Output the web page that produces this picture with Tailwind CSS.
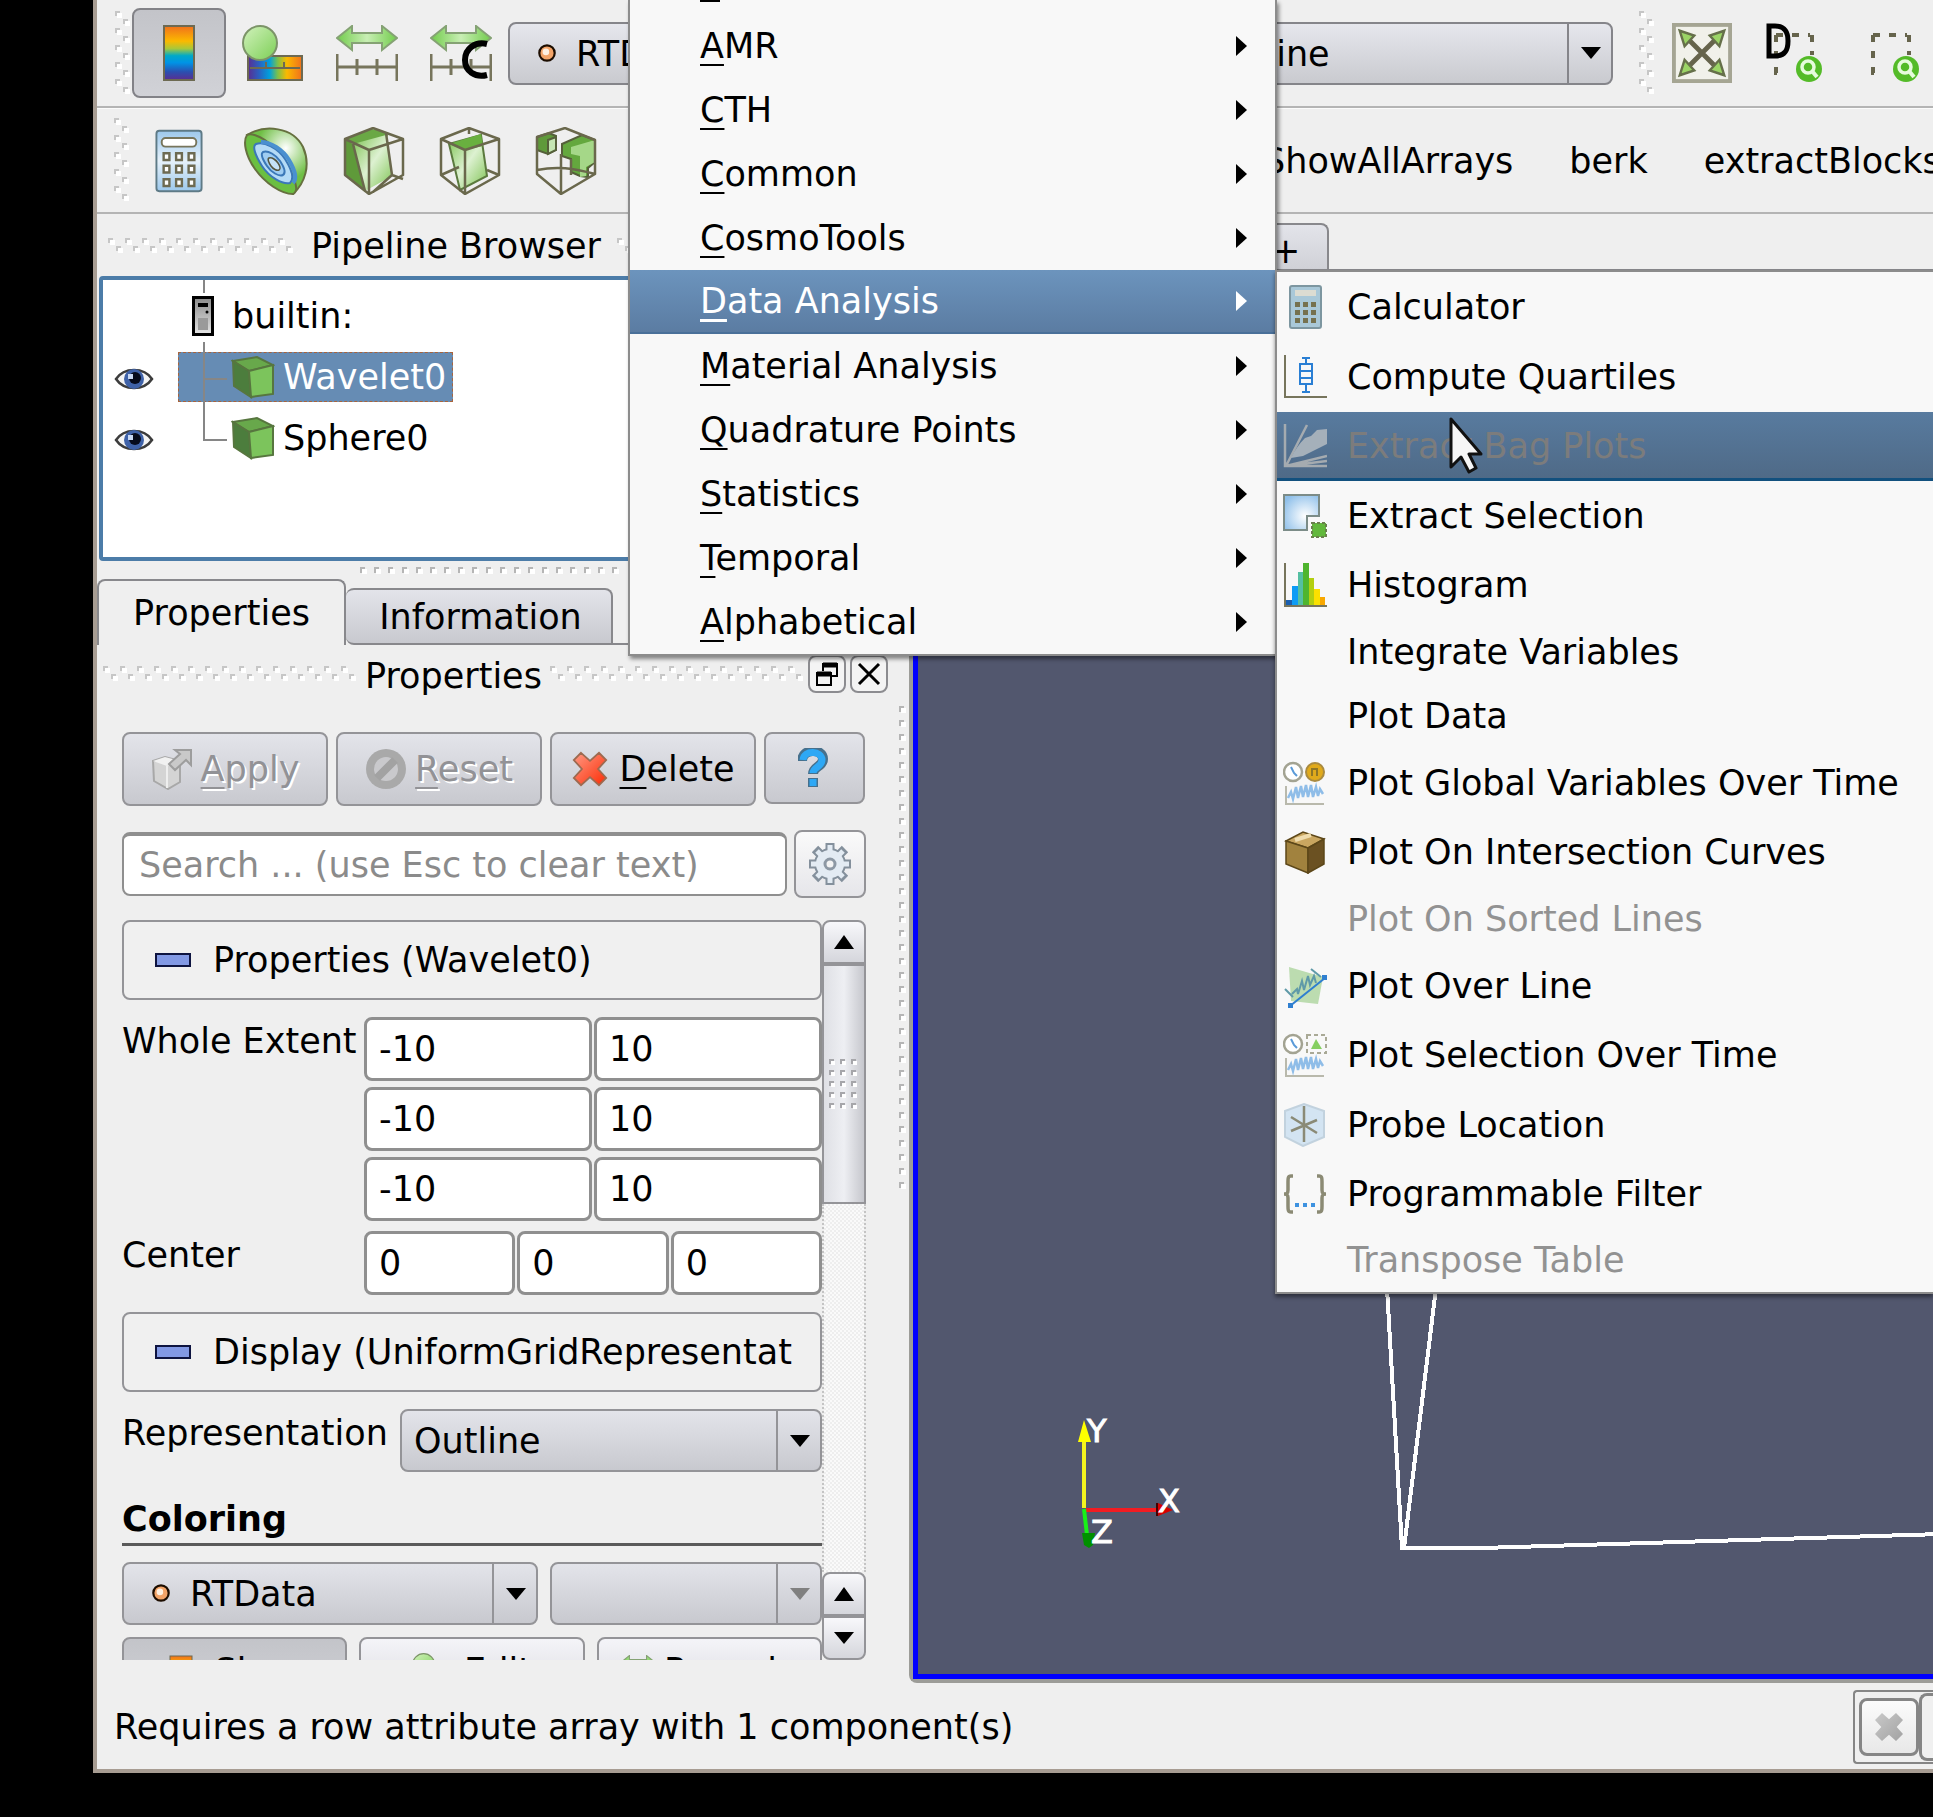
<!DOCTYPE html>
<html lang="en">
<head>
<meta charset="utf-8">
<meta name="viewport" content="width=device-width, initial-scale=1">
<title>ParaView</title>
<script src="https://cdn.jsdelivr.net/npm/@tailwindcss/browser@4"></script>
</head>
<body class="bg-black">

<!-- Shared patterns, gradients and icons -->
<svg class="absolute size-0" aria-hidden="true">
  <defs>
    <pattern id="zigzag" width="17" height="17" patternUnits="userSpaceOnUse">
      <path d="M2 2h5v5h-5zM10 10h5v5h-5z" fill="#fff"/>
      <path d="M0 0h5v2h-3v3h-2zM8 8h5v2h-3v3h-2z" fill="#c6c6c6"/>
    </pattern>
    <pattern id="dots" width="14" height="14" patternUnits="userSpaceOnUse">
      <path d="M2 2h5v5h-5z" fill="#fff"/><path d="M0 0h5v2h-3v4h-2z" fill="#b5b5b5"/>
    </pattern>
    <pattern id="thumbdots" width="11" height="11" patternUnits="userSpaceOnUse">
      <path d="M2 2h4v4h-4z" fill="#fff"/><path d="M0 0h5v2h-3v3h-2z" fill="#a6a6aa"/>
    </pattern>
    <pattern id="mesh" width="4" height="4" patternUnits="userSpaceOnUse">
      <rect width="4" height="4" fill="#fafafa"/><path d="M0 0h2v2h-2zM2 2h2v2h-2z" fill="#eeeeee"/>
    </pattern>
    <linearGradient id="rainbowV" x1="0" y1="0" x2="0" y2="1">
      <stop offset="0" stop-color="#f0701c"/><stop offset=".28" stop-color="#fbb900"/><stop offset=".42" stop-color="#a8c83a"/><stop offset=".55" stop-color="#00a9c8"/><stop offset=".68" stop-color="#0093e6"/><stop offset=".85" stop-color="#2b4fb0"/><stop offset="1" stop-color="#5a2d91"/>
    </linearGradient>
    <linearGradient id="rainbowH" x1="0" y1="0" x2="1" y2="0">
      <stop offset="0" stop-color="#5a2d91"/><stop offset=".2" stop-color="#2b5fc0"/><stop offset=".4" stop-color="#00a0dc"/><stop offset=".55" stop-color="#7cc04a"/><stop offset=".72" stop-color="#fbb900"/><stop offset="1" stop-color="#f0701c"/>
    </linearGradient>
    <linearGradient id="ball" x1="0" y1="0" x2="1" y2="1"><stop offset="0" stop-color="#d2f2bd"/><stop offset="1" stop-color="#7ccf55"/></linearGradient>
    <linearGradient id="arrowG" x1="0" y1="0" x2="1" y2="0"><stop offset="0" stop-color="#72cc4c"/><stop offset=".5" stop-color="#c8eeb4"/><stop offset="1" stop-color="#72cc4c"/></linearGradient>
    <linearGradient id="face" x1="0" y1="0" x2="1" y2="1"><stop offset="0" stop-color="#7cc250"/><stop offset=".5" stop-color="#ddf1d1"/><stop offset="1" stop-color="#7cc250"/></linearGradient>
    <linearGradient id="blueV" x1="0" y1="0" x2="0" y2="1"><stop offset="0" stop-color="#9cc8ec"/><stop offset=".5" stop-color="#e6f1fa"/><stop offset="1" stop-color="#9cc8ec"/></linearGradient>
    <radialGradient id="blueR" cx=".6" cy=".6" r=".7"><stop offset="0" stop-color="#fff"/><stop offset="1" stop-color="#8fc0ea"/></radialGradient>
    <radialGradient id="halo" cx=".65" cy=".3" r=".6"><stop offset="0" stop-color="#fff"/><stop offset=".8" stop-color="#6fbf45"/></radialGradient>
    <linearGradient id="redX" x1="0" y1="0" x2="1" y2="1"><stop offset="0" stop-color="#ff9a84"/><stop offset="1" stop-color="#fb2c05"/></linearGradient>
    <linearGradient id="greyX" x1="0" y1="0" x2="1" y2="1"><stop offset="0" stop-color="#c9c9c9"/><stop offset="1" stop-color="#a2a2a2"/></linearGradient>
    <linearGradient id="server" x1="0" y1="0" x2="0" y2="1"><stop offset="0" stop-color="#8a8a8a"/><stop offset="1" stop-color="#e6e6e6"/></linearGradient>

    <symbol id="i-ball" viewBox="0 0 62 56">
      <rect x="6" y="31" width="54" height="24" fill="url(#rainbowH)" stroke="#6d6a52" stroke-width="2"/>
      <path d="M8 43h50M24 37v7M42 37v7" stroke="#6d6a52" stroke-width="2"/>
      <circle cx="18" cy="18" r="17" fill="url(#ball)" stroke="#7c9468" stroke-width="2"/>
    </symbol>
    <symbol id="i-range" viewBox="0 0 62 56">
      <path d="M1 13l15-12v7h30v-7l15 12-15 12v-7h-30v7z" fill="url(#arrowG)" stroke="#85a274" stroke-width="2"/>
      <path d="M1 29v27M61 29v27M1 42h60M21 34v16M41 34v16" stroke="#77755c" stroke-width="3" fill="none"/>
    </symbol>
    <symbol id="i-circle" viewBox="0 0 20 20">
      <circle cx="10" cy="10" r="7" fill="#f3a468" stroke="#1c0d00" stroke-width="2"/><circle cx="9" cy="9" r="3" fill="#fff0e0"/>
    </symbol>
    <symbol id="i-calc" viewBox="0 0 50 66">
      <rect x="1.500" y="1.500" width="47" height="63" rx="3" fill="url(#blueV)" stroke="#5e7a86" stroke-width="2"/>
      <rect x="7" y="9" width="36" height="9" rx="4" fill="#fff" stroke="#77755c" stroke-width="2"/>
      <g fill="#fff" stroke="#6d6a52" stroke-width="2.500"><path d="M9 25h6v7h-6zM22 25h6v7h-6zM35 25h6v7h-6zM9 38h6v7h-6zM22 38h6v7h-6zM35 38h6v7h-6zM9 52h6v7h-6zM22 52h6v7h-6zM35 52h6v7h-6z"/></g>
    </symbol>
    <symbol id="i-contour" viewBox="0 0 66 68">
      <path d="M4 8C22-3 50 0 60 20c8 18 2 36-10 47z" fill="url(#halo)" stroke="#66703f" stroke-width="2"/>
      <path d="M4 8C0 14 2 28 12 42s26 25 38 25c4-2 4-6 2-12-4-14-16-32-30-42-6-4-14-7-18-5z" fill="#6bbf41" stroke="#66703f" stroke-width="2"/>
      <path d="M13 17c8-3 22 4 29 15s9 20 5 24c-7 2-21-6-28-17s-10-20-6-22z" fill="#b4dbf6" stroke="#3b78b8" stroke-width="2"/>
      <path d="M18 15c10 0 22 8 28 18s8 19 4 23" fill="none" stroke="#4a90d0" stroke-width="4"/>
      <path d="M20 25c5-2 13 3 17 9s6 12 3 14c-4 2-12-3-16-9s-7-12-4-14z" fill="#9fcdf2" stroke="#3b78b8" stroke-width="2"/>
      <path d="M26 31c3-1 7 2 9 5s3 6 1 7-6-1-8-4-4-7-2-8z" fill="#c5e2f8" stroke="#55553f" stroke-width="1.500"/>
    </symbol>
    <symbol id="i-clip" viewBox="0 0 62 68">
      <path d="M2 12l27-10 14 3 2 4-20 13z" fill="#6aa845"/><path d="M2 12l8 5 12 48L2 48z" fill="#5f9a3a"/>
      <path d="M10 17l33-9 6 41-27 15z" fill="url(#face)"/>
      <path d="M2 12L30 1l30 11v36L26 67 2 48zM2 12l24 11 34-11M26 23v44M10 17l12 47M43 6l6 42 11 4M30 65l19-17" fill="none" stroke="#6a684c" stroke-width="2.500" stroke-linejoin="round"/>
    </symbol>
    <symbol id="i-slice" viewBox="0 0 62 68">
      <path d="M10 17l32-9 6 41-27 14z" fill="url(#face)" stroke="#5b7a3e" stroke-width="2"/><path d="M10 17l32-10 2 12-18 4z" fill="#69b03f"/>
      <path d="M2 12L30 1l30 11v36L26 67 2 48zM2 12l24 11 34-11M26 23v44M2 48l18-8M48 43l12 5M30 1v6" fill="none" stroke="#6a684c" stroke-width="2.500" stroke-linejoin="round"/>
    </symbol>
    <symbol id="i-extract" viewBox="0 0 62 68">
      <path d="M2 10l12-4 7 3v14l-8 4-11-4z" fill="#5f9a3a" stroke="#55603a" stroke-width="2"/><path d="M13 13l8-3v13l-8 4z" fill="#c5e6b3" stroke="#55603a" stroke-width="2"/>
      <path d="M27 17l20-9 13 5v22l-7 6v9l-8-1-9-4V32l-9-3z" fill="#64a83e" stroke="#55603a" stroke-width="2"/>
      <path d="M36 20l24-7v22l-9 5v9l-6 1V29l-9-2z" fill="#a5d788"/>
      <path d="M2 10L30 1l30 12v34L26 67 2 47zM26 27v40M2 43c20-4 36-2 58 4M36 32v16" fill="none" stroke="#6a684c" stroke-width="2.500" stroke-linejoin="round"/>
    </symbol>
    <symbol id="i-fit" viewBox="0 0 62 62">
      <rect x="2" y="2" width="58" height="58" fill="#f1f1ea" stroke="#a5a593" stroke-width="4"/>
      <path d="M14 14l34 34M48 14L14 48" stroke="#66644c" stroke-width="5"/>
      <path d="M8 8l15 5-10 11zM54 8L39 13l10 11zM8 54l15-5-10-11zM54 54l-15-5 10-11z" fill="#9bd466" stroke="#66704a" stroke-width="2.500"/>
    </symbol>
    <symbol id="i-zoombox" viewBox="0 0 50 50">
      <path d="M2 2h34M2 2v38h10M38 2v20" fill="none" stroke="#66644c" stroke-width="4" stroke-dasharray="7 9"/>
      <circle cx="35" cy="36" r="13" fill="#54bb28"/><circle cx="34" cy="34" r="6" fill="none" stroke="#e6fbdc" stroke-width="3.500"/><path d="M38 38l5 6" stroke="#e6fbdc" stroke-width="4"/>
    </symbol>
    <symbol id="i-eye" viewBox="0 0 40 26">
      <path d="M2 13C10 1 30 1 38 13 30 25 10 25 2 13z" fill="#f4f4f4" stroke="#3c3c3c" stroke-width="2.500"/>
      <circle cx="20" cy="13" r="10" fill="#3f62a8"/><circle cx="21" cy="12" r="6" fill="#060b1c"/><path d="M14 8h5v5h-5z" fill="#c8d8f2"/>
    </symbol>
    <symbol id="i-cube" viewBox="0 0 44 44">
      <path d="M2 6l24-4 16 8-24 6z" fill="#68a84b" stroke="#57763f" stroke-width="2"/><path d="M2 6l16 10 2 26L3 31z" fill="#4c7d3d" stroke="#57763f" stroke-width="2"/><path d="M18 16l24-6v29l-22 3z" fill="#7cc45c" stroke="#57763f" stroke-width="2"/>
    </symbol>
    <symbol id="i-up" viewBox="0 0 20 14"><path d="M0 14L10 0l10 14z"/></symbol>
    <symbol id="i-down" viewBox="0 0 20 12"><path d="M0 0h20L10 12z"/></symbol>
    <symbol id="i-right" viewBox="0 0 11 20"><path d="M0 0l11 10L0 20z"/></symbol>
    <symbol id="i-minus" viewBox="0 0 36 14"><rect x="1" y="1" width="34" height="12" fill="#8299e4" stroke="#0e1440" stroke-width="2"/></symbol>
    <symbol id="i-clockplot" viewBox="0 0 44 44">
      <circle cx="10" cy="11" r="9" fill="#fff" stroke="#a3a392" stroke-width="2.500"/><path d="M8 6l3 6 3 3" stroke="#5a9ad8" stroke-width="2" fill="none"/>
      <path d="M3 25v18h38" stroke="#b9b9ac" stroke-width="2" fill="none"/><path d="M5 37l3-6 2 7 3-12 2 11 3-12 2 11 3-12 2 12 3-12 2 12 3-10 2 9 2-7 3 5" stroke="#8fbde8" stroke-width="2.500" fill="none"/>
    </symbol>
  </defs>
</svg>

<div class="relative flex min-h-screen flex-col overflow-hidden pb-[44px] pl-[93px] font-['DejaVu_Sans',sans-serif] text-[35px] leading-10 text-black">
  <div class="flex flex-1 flex-col border-b-4 border-l-4 border-[#a79c92] bg-[#efefef]">

    <!-- Active variable and camera toolbar -->
    <div class="flex h-[108px] items-center overflow-hidden border-b-2 border-[#b4b4b4] pl-[18px]" role="toolbar">
      <svg class="h-[85px] w-[17px] shrink-0"><rect width="17" height="85" fill="url(#zigzag)"/></svg>
      <button aria-label="Show color legend" class="flex h-[90px] w-[94px] shrink-0 items-center justify-center rounded-lg border-2 border-[#828287] bg-linear-to-b from-[#c3c4c9] to-[#d1d2d7]">
        <svg class="h-[56px] w-[32px]"><rect x="1" y="1" width="30" height="54" fill="url(#rainbowV)" stroke="#6d6a52" stroke-width="2"/></svg>
      </button>
      <button aria-label="Edit color map" class="ml-4 shrink-0"><svg class="h-[56px] w-[62px]"><use href="#i-ball"/></svg></button>
      <button aria-label="Rescale to data range" class="ml-8 shrink-0"><svg class="h-[56px] w-[62px]"><use href="#i-range"/></svg></button>
      <button aria-label="Rescale to custom range" class="relative ml-8 shrink-0"><svg class="h-[56px] w-[62px]"><use href="#i-range"/><path d="M57 19c-12-3-22 5-22 16s10 18 22 15" fill="none" stroke="#000" stroke-width="6"/></svg></button>
      <div class="relative ml-4 w-[420px] shrink-0">
        <select aria-label="Color by" class="h-[63px] w-full appearance-none rounded-lg border-2 border-[#85858a] bg-linear-to-b from-[#e6e7ed] to-[#c9cacf] pt-[2px] pl-[66px]"><option>RTData</option></select>
        <svg class="pointer-events-none absolute top-[20px] left-[28px] size-[22px]"><use href="#i-circle"/></svg>
      </div>
      <div class="relative ml-[265px] w-[420px] shrink-0">
        <select aria-label="Representation style" class="h-[63px] w-full appearance-none rounded-lg border-2 border-[#85858a] bg-linear-to-b from-[#e6e7ed] to-[#c9cacf] pt-[2px] pl-[8px]"><option>Outline</option></select>
        <span class="pointer-events-none absolute inset-y-0 right-0 flex w-[46px] items-center justify-center border-l-2 border-[#85858a]"><svg class="h-[12px] w-[20px]"><use href="#i-down"/></svg></span>
      </div>
      <svg class="ml-[26px] h-[85px] w-[17px] shrink-0"><rect width="17" height="85" fill="url(#zigzag)"/></svg>
      <button aria-label="Reset camera" class="ml-4 shrink-0"><svg class="size-[60px]"><use href="#i-fit"/></svg></button>
      <button aria-label="Zoom to data" class="ml-8 flex shrink-0 items-end"><svg class="h-[60px] w-[62px]"><use href="#i-zoombox" x="10" y="10" width="50" height="50"/><path d="M5 3h6c10 0 13 6 13 15s-3 15-13 15H5z" fill="none" stroke="#000" stroke-width="5"/></svg></button>
      <button aria-label="Zoom to box" class="ml-[45px] flex shrink-0 items-end pt-[10px]"><svg class="size-[50px]"><use href="#i-zoombox"/></svg></button>
    </div>

    <!-- Filters and macros toolbar -->
    <div class="flex h-[106px] items-center overflow-hidden border-t border-b-2 border-t-[#fbfbfb] border-b-[#b4b4b4] pl-[17px]" role="toolbar">
      <svg class="h-[85px] w-[17px] shrink-0"><rect width="17" height="85" fill="url(#zigzag)"/></svg>
      <button aria-label="Calculator" class="ml-6 shrink-0"><svg class="h-[66px] w-[48px]"><use href="#i-calc"/></svg></button>
      <button aria-label="Contour" class="ml-10 shrink-0"><svg class="h-[68px] w-[66px]"><use href="#i-contour"/></svg></button>
      <button aria-label="Clip" class="ml-[34px] shrink-0"><svg class="h-[68px] w-[62px]"><use href="#i-clip"/></svg></button>
      <button aria-label="Slice" class="ml-[34px] shrink-0"><svg class="h-[68px] w-[62px]"><use href="#i-slice"/></svg></button>
      <button aria-label="Extract subset" class="ml-[34px] shrink-0"><svg class="h-[68px] w-[62px]"><use href="#i-extract"/></svg></button>
      <div class="ml-[666px] flex shrink-0 gap-14">
        <button>ShowAllArrays</button>
        <button>berk</button>
        <button>extractBlocks</button>
      </div>
    </div>

    <div class="flex flex-1">
      <!-- Left docks -->
      <div class="flex w-[794px] shrink-0 flex-col">
        <div class="flex h-[62px] items-center gap-4 pt-[2px] pl-[11px]">
          <svg class="h-4 w-[187px] shrink-0"><rect width="187" height="16" fill="url(#zigzag)"/></svg>
          <h2>Pipeline Browser</h2>
          <svg class="h-4 w-[187px]"><rect width="187" height="16" fill="url(#zigzag)"/></svg>
        </div>

        <div class="relative ml-[2px] h-[285px] rounded border-4 border-[#4c7ca8] bg-white pt-[5px]">
          <ul class="leading-[50px]">
            <li class="flex h-[61px] items-center pl-[89px]">
              <svg class="h-[40px] w-[22px]" viewBox="0 0 22 40"><rect x="1.500" y="1.500" width="19" height="37" fill="url(#server)" stroke="#000" stroke-width="3"/><path d="M6 7h10v4H6z"/><circle cx="15" cy="16" r="1.500"/><path d="M6 22h10v12H6z" fill="#9a9a9a"/></svg>
              <span class="ml-[18px]">builtin:</span>
            </li>
            <li class="flex h-[61px] items-center pl-[11px]">
              <svg class="mt-1 h-[26px] w-[40px]"><use href="#i-eye"/></svg>
              <span class="ml-[24px] flex h-[50px] items-center border border-dashed border-[#a8643c] bg-[#668cb4] pr-[6px] pl-[52px] text-white"><svg class="size-[44px]"><use href="#i-cube"/></svg><span class="ml-2">Wavelet0</span></span>
            </li>
            <li class="flex h-[61px] items-center pl-[11px]">
              <svg class="mt-1 h-[26px] w-[40px]"><use href="#i-eye"/></svg>
              <svg class="ml-[77px] size-[44px]"><use href="#i-cube"/></svg><span class="ml-2">Sphere0</span>
            </li>
          </ul>
          <svg class="pointer-events-none absolute top-0 left-[100px] h-[170px] w-[26px]"><path d="M1 0v13M1 62v98h23M1 99h23" fill="none" stroke="#868686" stroke-width="2"/></svg>
        </div>

        <svg class="mt-[6px] ml-[263px] h-[10px] w-[266px]"><rect width="266" height="10" fill="url(#dots)"/></svg>

        <div class="flex items-end pt-[2px]" role="tablist">
          <button role="tab" aria-selected="true" class="h-[66px] w-[249px] rounded-t-lg border-2 border-b-0 border-[#88888c] bg-[#efefef]">Properties</button>
          <button role="tab" aria-selected="false" class="h-[57px] w-[267px] self-end rounded-t-lg rounded-bl-lg border-2 border-l-0 border-[#88888c] bg-linear-to-b from-[#e3e4ea] to-[#c8c9cf] pl-1">Information</button>
          <div class="h-[2px] flex-1 bg-[#88888c]"></div>
        </div>

        <div class="mt-[9px] flex h-[40px] items-center pl-[6px]">
          <svg class="h-4 w-[254px] shrink-0"><rect width="254" height="16" fill="url(#zigzag)"/></svg>
          <h2 class="ml-2 pt-1">Properties</h2>
          <svg class="ml-2 h-4 w-[254px] shrink-0"><rect width="254" height="16" fill="url(#zigzag)"/></svg>
          <button aria-label="Float panel" class="ml-1 flex size-[38px] items-center justify-center rounded-lg border-2 border-[#8c8c90] bg-[#f4f4f4]"><svg class="size-[26px]" fill="none" stroke="#000" stroke-width="2"><path d="M9 10V3h14v12h-6M3 12h14v12H3z"/><path d="M9 4h14M3 13h14" stroke-width="5"/></svg></button>
          <button aria-label="Close panel" class="ml-1 flex size-[38px] items-center justify-center rounded-lg border-2 border-[#8c8c90] bg-[#f4f4f4]"><svg class="size-[24px]" stroke="#000" stroke-width="3"><path d="M2 2l20 20M22 2L2 22"/></svg></button>
        </div>

        <div class="flex flex-1">
          <div class="flex w-[769px] flex-col pt-[38px] pl-[25px]">
            <div class="flex items-start gap-2">
              <button disabled class="flex h-[74px] w-[206px] items-center justify-center gap-2 rounded-lg border-2 border-[#949498] bg-linear-to-b from-[#e3e4ea] to-[#c8c9cf] text-[#929296] [text-shadow:2px_2px_0_#fff]">
                <svg class="size-[42px]" viewBox="0 0 42 42"><path d="M2 13l12-4 15 4v21l-12 7-14-8z" fill="#d4d4d4" stroke="#a8a8a8" stroke-width="2"/><path d="M2 13l14 5 13-5-15-4z" fill="#f1f1f1"/><path d="M16 18v22" stroke="#eee" stroke-width="2"/><path d="M18 16L29 6l-5-4h16v15l-5-5-11 10z" fill="#c9c9c9" stroke="#9d9d9d" stroke-width="2"/></svg>
                <span><u class="decoration-2 underline-offset-[6px]">A</u>pply</span>
              </button>
              <button disabled class="flex h-[74px] w-[206px] items-center justify-center gap-2 rounded-lg border-2 border-[#949498] bg-linear-to-b from-[#e3e4ea] to-[#c8c9cf] text-[#929296] [text-shadow:2px_2px_0_#fff]">
                <svg class="size-[42px]" viewBox="0 0 42 42"><circle cx="21" cy="21" r="20" fill="#a9a9a9"/><circle cx="21" cy="21" r="12" fill="#c9c9cc"/><path d="M12 30L30 12" stroke="#a2a2a2" stroke-width="8"/></svg>
                <span><u class="decoration-2 underline-offset-[6px]">R</u>eset</span>
              </button>
              <button class="flex h-[74px] w-[206px] items-center justify-center gap-[12px] rounded-lg border-2 border-[#949498] bg-linear-to-b from-[#e3e4ea] to-[#c8c9cf]">
                <svg class="h-[38px] w-[36px] fill-[url(#redX)]" viewBox="0 0 40 40" stroke="#9d6a50" stroke-width="2"><path d="M10 2l10 9L30 2l8 8-9 10 9 10-8 8-10-9-10 9-8-8 9-10L2 10z"/></svg>
                <span><u class="decoration-2 underline-offset-[6px]">D</u>elete</span>
              </button>
              <button aria-label="Help" class="flex h-[72px] w-[101px] items-center justify-center rounded-lg border-2 border-[#949498] bg-linear-to-b from-[#e3e4ea] to-[#c8c9cf] pr-1">
                <svg class="h-[40px] w-[30px]" viewBox="0 0 30 40" fill="none"><path d="M4 13C4 0 25 0 25 11c0 8-10 7-10 15M15 30v9" stroke="#47708c" stroke-width="10"/><path d="M5 12c1-11 19-9 19 0 0 7-9 7-9 13M15 31v7" stroke="#2ea8f5" stroke-width="7"/></svg>
              </button>
            </div>
            <div class="mt-6 flex items-center gap-[7px]">
              <input type="text" aria-label="Search properties" placeholder="Search ... (use Esc to clear text)" class="h-[64px] min-w-0 flex-1 rounded-lg border-2 border-t-4 border-[#8f8f8f] bg-white pl-[15px] placeholder:text-[#8b8b8b]">
              <button aria-label="Advanced properties" class="flex h-[68px] w-[72px] items-center justify-center rounded-lg border-2 border-[#949498] bg-linear-to-b from-[#fafafa] to-[#e6e6ea]">
                <svg class="size-[46px]" viewBox="0 0 46 46" fill="none"><g stroke="#84909c" stroke-width="9"><path d="M23 2v42M2 23h42M8 8l30 30M38 8L8 38"/></g><circle cx="23" cy="23" r="15" fill="#e3ebf3" stroke="#84909c" stroke-width="2"/><g stroke="#e3ebf3" stroke-width="5"><path d="M23 4v38M4 23h38M10 10l26 26M36 10L10 36"/></g><circle cx="23" cy="23" r="13" fill="#e3ebf3"/><circle cx="23" cy="23" r="5" fill="#f3f3f3" stroke="#8d98a4" stroke-width="3"/></svg>
              </button>
            </div>

            <!-- Scrolled property form -->
            <div class="mt-[22px] flex h-[740px]">
              <div class="w-[700px] overflow-hidden">
                <button class="flex h-[80px] w-full items-center gap-[22px] rounded-lg border-2 border-[#949498] bg-[#f0f0f0] pl-[31px]"><svg class="h-[14px] w-[36px]"><use href="#i-minus"/></svg>Properties (Wavelet0)</button>
                <div class="mt-[17px] flex gap-3">
                  <label for="ext0" class="w-[230px] shrink-0 pt-1 whitespace-nowrap">Whole Extent</label>
                  <div class="grid flex-1 grid-cols-2 gap-x-[2px] gap-y-[6px]">
                    <input id="ext0" type="text" value="-10" class="h-[64px] w-full min-w-0 rounded-lg border-3 border-[#8f8f8f] bg-white pl-3">
                    <input aria-label="Extent X max" type="text" value="10" class="h-[64px] w-full min-w-0 rounded-lg border-3 border-[#8f8f8f] bg-white pl-3">
                    <input aria-label="Extent Y min" type="text" value="-10" class="h-[64px] w-full min-w-0 rounded-lg border-3 border-[#8f8f8f] bg-white pl-3">
                    <input aria-label="Extent Y max" type="text" value="10" class="h-[64px] w-full min-w-0 rounded-lg border-3 border-[#8f8f8f] bg-white pl-3">
                    <input aria-label="Extent Z min" type="text" value="-10" class="h-[64px] w-full min-w-0 rounded-lg border-3 border-[#8f8f8f] bg-white pl-3">
                    <input aria-label="Extent Z max" type="text" value="10" class="h-[64px] w-full min-w-0 rounded-lg border-3 border-[#8f8f8f] bg-white pl-3">
                  </div>
                </div>
                <div class="mt-[10px] flex gap-3">
                  <label for="cx" class="w-[230px] shrink-0 pt-1">Center</label>
                  <div class="grid flex-1 grid-cols-3 gap-x-[2px]">
                    <input id="cx" type="text" value="0" class="h-[64px] w-full min-w-0 rounded-lg border-3 border-[#8f8f8f] bg-white pl-3">
                    <input aria-label="Center Y" type="text" value="0" class="h-[64px] w-full min-w-0 rounded-lg border-3 border-[#8f8f8f] bg-white pl-3">
                    <input aria-label="Center Z" type="text" value="0" class="h-[64px] w-full min-w-0 rounded-lg border-3 border-[#8f8f8f] bg-white pl-3">
                  </div>
                </div>
                <button class="mt-[17px] flex h-[80px] w-full items-center gap-[22px] rounded-lg border-2 border-[#949498] bg-[#f0f0f0] pl-[31px] whitespace-nowrap"><svg class="h-[14px] w-[36px]"><use href="#i-minus"/></svg>Display (UniformGridRepresentat</button>
                <div class="mt-[17px] flex justify-between">
                  <label for="rep" class="pt-1">Representation</label>
                  <div class="relative w-[422px]">
                    <select id="rep" class="h-[63px] w-full appearance-none rounded-lg border-2 border-[#949498] bg-linear-to-b from-[#e3e4ea] to-[#c8c9cf] pl-[12px]"><option>Outline</option></select>
                    <span class="pointer-events-none absolute inset-y-0 right-0 flex w-[46px] items-center justify-center border-l-2 border-[#949498]"><svg class="h-[12px] w-[20px]"><use href="#i-down"/></svg></span>
                  </div>
                </div>
                <h3 class="mt-[27px] border-b-3 border-[#5a5a5a] pb-1 font-bold">Coloring</h3>
                <div class="mt-4 flex justify-between">
                  <div class="relative w-[416px]">
                    <select aria-label="Coloring array" class="h-[63px] w-full appearance-none rounded-lg border-2 border-[#949498] bg-linear-to-b from-[#e3e4ea] to-[#c8c9cf] pl-[66px]"><option>RTData</option></select>
                    <svg class="pointer-events-none absolute top-[20px] left-[28px] size-[22px]"><use href="#i-circle"/></svg>
                    <span class="pointer-events-none absolute inset-y-0 right-0 flex w-[46px] items-center justify-center border-l-2 border-[#949498]"><svg class="h-[12px] w-[20px]"><use href="#i-down"/></svg></span>
                  </div>
                  <div class="relative w-[272px]">
                    <select disabled aria-label="Component" class="h-[63px] w-full appearance-none rounded-lg border-2 border-[#949498] bg-linear-to-b from-[#e3e4ea] to-[#c8c9cf]"></select>
                    <span class="pointer-events-none absolute inset-y-0 right-0 flex w-[46px] items-center justify-center border-l-2 border-[#949498]"><svg class="h-[12px] w-[20px]" fill="#808080"><use href="#i-down"/></svg></span>
                  </div>
                </div>
                <div class="mt-3 grid grid-cols-3 gap-3">
                  <button class="flex h-[68px] items-center justify-center gap-3 rounded-lg border-2 border-[#949498] bg-linear-to-b from-[#c3c4c9] to-[#d1d2d7]"><svg class="h-[32px] w-[42px]"><rect x="10" y="1" width="22" height="30" fill="url(#rainbowV)" stroke="#6d6a52"/></svg>Show</button>
                  <button class="flex h-[68px] items-center justify-center gap-3 rounded-lg border-2 border-[#949498] bg-linear-to-b from-[#f4f4f8] to-[#d8d8de]"><svg class="h-[36px] w-[40px]"><use href="#i-ball"/></svg>Edit</button>
                  <button class="flex h-[68px] items-center justify-center gap-2 rounded-lg border-2 border-[#949498] bg-linear-to-b from-[#f4f4f8] to-[#d8d8de]"><svg class="h-[32px] w-[36px]"><use href="#i-range"/></svg>Rescale</button>
                </div>
              </div>
              <!-- Scroll bar -->
              <div class="flex w-[44px] flex-col">
                <span class="flex h-[44px] items-center justify-center rounded-t-lg border-2 border-[#949498] bg-linear-to-b from-[#f8f8fb] to-[#d5d6dc]"><svg class="h-[14px] w-[20px]"><use href="#i-up"/></svg></span>
                <span class="flex h-[240px] items-center justify-center border-2 border-[#949498] bg-linear-to-r from-[#dfe0e5] via-[#eeeff3] to-[#c6c7cd]"><svg class="h-[50px] w-[30px]"><rect width="30" height="50" fill="url(#thumbdots)"/></svg></span>
                <svg class="w-full flex-1 border-x-2 border-dotted border-[#c4c4c4]"><rect width="100%" height="100%" fill="url(#mesh)"/></svg>
                <span class="flex h-[44px] items-center justify-center rounded-t-lg border-2 border-[#949498] bg-linear-to-b from-[#f8f8fb] to-[#d5d6dc]"><svg class="h-[14px] w-[20px]"><use href="#i-up"/></svg></span>
                <span class="flex h-[44px] items-center justify-center rounded-b-lg border-2 border-[#949498] bg-linear-to-b from-[#f8f8fb] to-[#d5d6dc]"><svg class="h-[12px] w-[20px]"><use href="#i-down"/></svg></span>
              </div>
            </div>
          </div>
        </div>
      </div>

      <!-- Splitter between docks and view -->
      <div class="flex w-[18px] shrink-0 flex-col pt-[492px]"><svg class="ml-2 h-[483px] w-[8px]"><rect width="8" height="483" fill="url(#dots)"/></svg></div>

      <!-- View area -->
      <div class="flex min-w-0 flex-1 flex-col">
        <div class="flex h-[57px] items-end border-b-2 border-[#88888c] pl-[344px]">
          <button aria-label="New layout" class="flex h-[46px] w-[76px] items-center rounded-t-lg border-2 border-b-0 border-[#88888c] bg-linear-to-b from-[#e3e4ea] to-[#d0d1d7] pt-[8px] pl-4">+</button>
        </div>
        <div class="flex flex-1 flex-col rounded-bl-lg border-b-4 border-l-4 border-[#9c9c98]">
          <div class="relative flex-1 border-b-[5px] border-l-[5px] border-[#0000ff] bg-[#52576e]">
            <svg class="absolute bottom-0 left-0 h-[600px] w-full">
              <g fill="none" stroke="#fff" stroke-width="4" shape-rendering="crispEdges">
                <path d="M469 214L484 474M518 214L486 474"/>
                <path d="M482 474h82l460-14"/>
              </g>
              <path d="M166 366v68" stroke="#f4f41e" stroke-width="4"/><path d="M166 346l7 22h-13z" fill="#ffff00"/>
              <path d="M168 436h71" stroke="#f21c22" stroke-width="4"/><path d="M240 429l15 7-15 6z" fill="#d80000"/><path d="M239 429v13" stroke="#400" stroke-width="2"/>
              <path d="M166 435l3 26" stroke="#18f018" stroke-width="4"/><path d="M164 459h13l-2 12-4 3-5-3z" fill="#009000"/>
              <g fill="#fff" stroke="#fff" font-size="32" font-family="DejaVu Sans, sans-serif"><text x="169" y="368">Y</text><text x="240" y="438">X</text><text x="173" y="469">Z</text></g>
            </svg>
          </div>
        </div>
      </div>
    </div>

    <!-- Status bar -->
    <div class="flex h-[86px] items-center justify-between pt-[2px] pl-[17px]">
      <p role="status">Requires a row attribute array with 1 component(s)</p>
      <div class="flex h-[74px] w-[80px] items-center rounded-l border-2 border-r-0 border-[#858585] pl-1">
        <button disabled aria-label="Abort" class="flex h-[58px] w-[60px] shrink-0 items-center justify-center rounded-lg border-3 border-[#858585] bg-linear-to-b from-[#fbfbfb] to-[#e8e8e8]"><svg class="size-[28px] fill-[url(#greyX)]" viewBox="0 0 40 40"><path d="M10 0l10 9L30 0l10 10-9 10 9 10-10 10-10-9-10 9L0 30l9-10L0 10z"/></svg></button>
        <div class="h-[68px] flex-1 rounded-l-lg border-3 border-r-0 border-[#858585] bg-[#f0f0f0]"></div>
      </div>
    </div>
  </div>

  <!-- Filters menu -->
  <div role="menu" aria-label="Filters" class="absolute top-0 left-[628px] flex w-[649px] flex-col border-x-2 border-b-2 border-[#8c8c8c] bg-[#f8f8f8] whitespace-nowrap shadow-[2px_3px_4px_rgba(0,0,0,0.45)] [text-decoration-skip-ink:none]">
    <div class="h-[14px] pl-[70px]"><div class="h-[2px] w-[20px] bg-black"></div></div>
    <button role="menuitem" class="flex h-16 items-center justify-between pr-[28px] pl-[70px]"><span><u class="decoration-2 underline-offset-[6px]">A</u>MR</span><svg class="h-5 w-[11px]"><use href="#i-right"/></svg></button>
    <button role="menuitem" class="flex h-16 items-center justify-between pr-[28px] pl-[70px]"><span><u class="decoration-2 underline-offset-[6px]">C</u>TH</span><svg class="h-5 w-[11px]"><use href="#i-right"/></svg></button>
    <button role="menuitem" class="flex h-16 items-center justify-between pr-[28px] pl-[70px]"><span><u class="decoration-2 underline-offset-[6px]">C</u>ommon</span><svg class="h-5 w-[11px]"><use href="#i-right"/></svg></button>
    <button role="menuitem" class="flex h-16 items-center justify-between pr-[28px] pl-[70px]"><span><u class="decoration-2 underline-offset-[6px]">C</u>osmoTools</span><svg class="h-5 w-[11px]"><use href="#i-right"/></svg></button>
    <button role="menuitem" class="flex h-16 items-center justify-between border-b-2 border-[#4a7099] bg-linear-to-b from-[#6c94bd] to-[#5b7ca2] pr-[28px] pl-[70px] text-white"><span><u class="decoration-3 underline-offset-[6px]">D</u>ata Analysis</span><svg class="h-5 w-[11px]" fill="#fff"><use href="#i-right"/></svg></button>
    <button role="menuitem" class="flex h-16 items-center justify-between pr-[28px] pl-[70px]"><span><u class="decoration-2 underline-offset-[6px]">M</u>aterial Analysis</span><svg class="h-5 w-[11px]"><use href="#i-right"/></svg></button>
    <button role="menuitem" class="flex h-16 items-center justify-between pr-[28px] pl-[70px]"><span><u class="decoration-2 underline-offset-[6px]">Q</u>uadrature Points</span><svg class="h-5 w-[11px]"><use href="#i-right"/></svg></button>
    <button role="menuitem" class="flex h-16 items-center justify-between pr-[28px] pl-[70px]"><span><u class="decoration-2 underline-offset-[6px]">S</u>tatistics</span><svg class="h-5 w-[11px]"><use href="#i-right"/></svg></button>
    <button role="menuitem" class="flex h-16 items-center justify-between pr-[28px] pl-[70px]"><span><u class="decoration-2 underline-offset-[6px]">T</u>emporal</span><svg class="h-5 w-[11px]"><use href="#i-right"/></svg></button>
    <button role="menuitem" class="flex h-16 items-center justify-between pr-[28px] pl-[70px]"><span><u class="decoration-2 underline-offset-[6px]">A</u>lphabetical</span><svg class="h-5 w-[11px]"><use href="#i-right"/></svg></button>
  </div>

  <!-- Data Analysis submenu -->
  <div role="menu" aria-label="Data Analysis" class="absolute top-[270px] right-0 left-[1275px] flex flex-col border-y-2 border-l-2 border-[#8c8c8c] bg-[#f8f8f8] whitespace-nowrap shadow-[0_3px_4px_rgba(0,0,0,0.45)]">
    <button role="menuitem" class="flex h-[70px] items-center gap-5 pl-[6px]"><svg class="size-11" viewBox="0 0 44 44"><rect x="7" y="1" width="31" height="42" rx="2" fill="#a9c8d8" stroke="#7d96a0" stroke-width="2"/><path d="M12 5h21v6H12z" fill="#dcdcd2"/><path d="M12 17h5v5h-5zM20 17h5v5h-5zM28 17h5v5h-5zM12 25h5v5h-5zM20 25h5v5h-5zM28 25h5v5h-5zM12 33h5v5h-5zM20 33h5v5h-5zM28 33h5v5h-5z" fill="#75714f"/></svg>Calculator</button>
    <button role="menuitem" class="flex h-[70px] items-center gap-5 pl-[6px]"><svg class="size-11" viewBox="0 0 44 44" fill="none"><path d="M2 0v42h42" stroke="#77755c" stroke-width="2"/><path d="M19 3h8M23 3v6M17 9h12v20H17zM17 16h12M17 23h12M23 29v8M19 37h8" stroke="#2a7fd4" stroke-width="2"/></svg>Compute Quartiles</button>
    <button role="menuitem" aria-disabled="true" class="flex h-[69px] items-center gap-5 border-b-3 border-[#12507e] bg-linear-to-b from-[#587b9f] to-[#4f6a87] pt-[2px] pl-[6px] text-[#7c7c7c]"><svg class="size-11" viewBox="0 0 44 44"><path d="M2 0v42h42M3 42L24 1M3 42l41-10M3 42l41-5" fill="none" stroke="#a5abb0" stroke-width="2.500"/><path d="M8 34c4-8 8-14 14-20l6-2 6-6 10-1v15L20 32z" fill="#a5b0ba"/></svg>Extract Bag Plots</button>
    <button role="menuitem" class="flex h-[69px] items-center gap-5 pl-[6px]"><svg class="size-11" viewBox="0 0 44 44"><path d="M1 1h35v21H24v14H1z" fill="url(#blueR)" stroke="#7c8c88" stroke-width="2"/><rect x="29" y="29" width="14" height="14" fill="#62b83c" stroke="#69804c" stroke-width="2" stroke-dasharray="3 2"/></svg>Extract Selection</button>
    <button role="menuitem" class="flex h-[70px] items-center gap-5 pl-[6px]"><svg class="size-11" viewBox="0 0 44 44"><path d="M3 37h6v6H3z" fill="#1b5fb0"/><path d="M9 23h6v20H9z" fill="#0e9cf5"/><path d="M15 9h5v34h-5z" fill="#55bfa2"/><path d="M20 0h6v43h-6z" fill="#4fb52e"/><path d="M26 15h5v28h-5z" fill="#b3cf10"/><path d="M31 26h6v17h-6z" fill="#fbe000"/><path d="M37 34h5v9h-5z" fill="#f9a800"/><path d="M2 0v43h42" fill="none" stroke="#77755c" stroke-width="2"/></svg>Histogram</button>
    <button role="menuitem" class="flex h-[64px] items-center pl-[70px]">Integrate Variables</button>
    <button role="menuitem" class="flex h-[64px] items-center pl-[70px]">Plot Data</button>
    <button role="menuitem" class="flex h-[69px] items-center gap-5 pl-[6px]"><svg class="size-11" viewBox="0 0 44 44"><use href="#i-clockplot"/><circle cx="32" cy="11" r="9" fill="#e0aa1c" stroke="#a98a40" stroke-width="2"/><path d="M29 7v8M34 7v8M29 8h6" stroke="#8f7626" stroke-width="2"/></svg>Plot Global Variables Over Time</button>
    <button role="menuitem" class="flex h-[70px] items-center gap-5 pl-[6px]"><svg class="size-11" viewBox="0 0 44 44" stroke="#5c4719" stroke-width="1.500"><path d="M3 11L20 2l21 7-16 9z" fill="#c9a660"/><path d="M3 11l22 7v25L3 34z" fill="#a1823e"/><path d="M25 18l16-9v25l-16 9z" fill="#6b5122"/><path d="M12 10l16-5" stroke="#efdcae" stroke-width="4"/></svg>Plot On Intersection Curves</button>
    <button role="menuitem" aria-disabled="true" class="flex h-[64px] items-center pl-[70px] text-[#929292]">Plot On Sorted Lines</button>
    <button role="menuitem" class="flex h-[69px] items-center gap-5 pl-[6px]"><svg class="size-11" viewBox="0 0 44 44" fill="none"><path d="M6 3l34 10-5 27-27-3z" fill="#bcdcb0"/><path d="M7 42L42 14" stroke="#2f7fd0" stroke-width="2"/><path d="M2 25l8 8M28 5l10 8M9 30l5-5 1 5 4-13 2 9 4-14 2 9 4-9 2 7" stroke="#5f9aa8" stroke-width="2"/><path d="M5 39h5v5H5zM39 11h5v5h-5z" fill="#2f7fd0"/></svg>Plot Over Line</button>
    <button role="menuitem" class="flex h-[70px] items-center gap-5 pl-[6px]"><svg class="size-11" viewBox="0 0 44 44"><use href="#i-clockplot"/><rect x="24" y="2" width="19" height="18" fill="none" stroke="#a9a996" stroke-width="2" stroke-dasharray="4 3"/><path d="M33 6l6 10H28z" fill="#86cf62"/></svg>Plot Selection Over Time</button>
    <button role="menuitem" class="flex h-[69px] items-center gap-5 pl-[6px]"><svg class="size-11" viewBox="0 0 44 44"><path d="M2 8l19-7 20 7v26L20 43 2 34z" fill="#d3e4f2" stroke="#c2d2de" stroke-width="2"/><path d="M21 3v36M8 14l26 16M8 28l26-11" stroke="#8a8a76" stroke-width="2.500"/></svg>Probe Location</button>
    <button role="menuitem" class="flex h-[69px] items-center gap-5 pl-[6px]"><svg class="size-11" viewBox="0 0 44 44" fill="none"><path d="M10 4H8c-3 0-3 2-3 6v8c0 3-1 4-4 4 3 0 4 1 4 4v8c0 4 0 6 3 6h2M34 4h2c3 0 3 2 3 6v8c0 3 1 4 4 4-3 0-4 1-4 4v8c0 4 0 6-3 6h-2" stroke="#8b8a74" stroke-width="3.500"/><path d="M12 31h4v4h-4zM20 31h4v4h-4zM28 31h4v4h-4z" fill="#3d92e0"/></svg>Programmable Filter</button>
    <button role="menuitem" aria-disabled="true" class="flex h-[64px] items-center pl-[70px] text-[#929292]">Transpose Table</button>
  </div>

  <!-- Mouse pointer -->
  <svg class="pointer-events-none absolute top-[416px] left-[1449px] h-[58px] w-[36px]" viewBox="0 0 36 58"><path d="M2 3v48l10-10 8 15 7-4-7-14h12z" fill="#f6f6f6" stroke="#111" stroke-width="3" stroke-linejoin="round"/></svg>
</div>
</body>
</html>
